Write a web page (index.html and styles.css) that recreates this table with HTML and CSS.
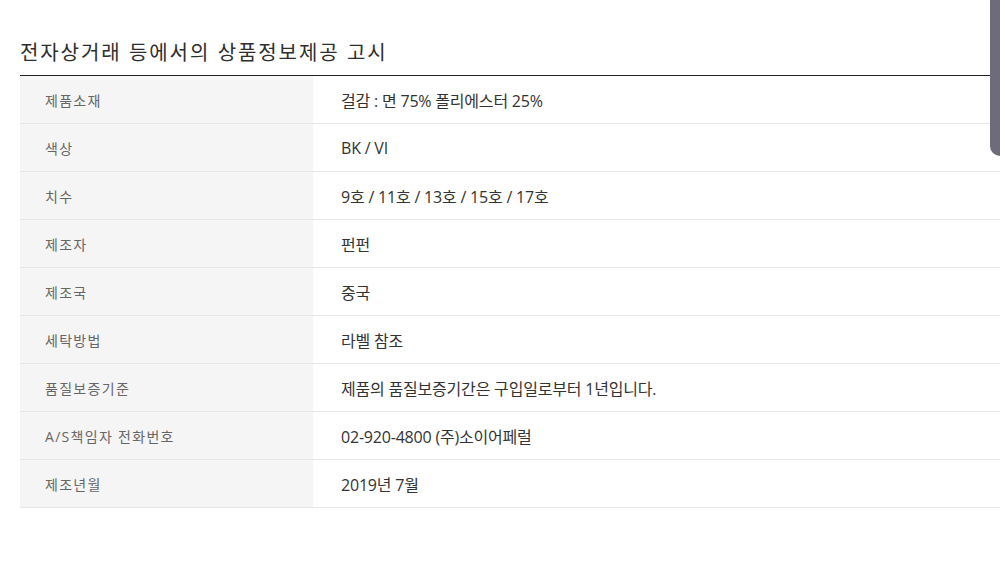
FILE: index.html
```html
<!DOCTYPE html>
<html lang="ko">
<head>
<meta charset="utf-8">
<link rel="stylesheet" href="styles.css">
</head>
<body>
<div class="page">
  <h2 class="title">전자상거래 등에서의 상품정보제공 고시</h2>
  <div class="table">
    <div class="row"><div class="label">제품소재</div><div class="value">걸감 : 면 75% 폴리에스터 25%</div></div>
    <div class="row"><div class="label">색상</div><div class="value">BK / VI</div></div>
    <div class="row"><div class="label">치수</div><div class="value">9호 / 11호 / 13호 / 15호 / 17호</div></div>
    <div class="row"><div class="label">제조자</div><div class="value">펀펀</div></div>
    <div class="row"><div class="label">제조국</div><div class="value">중국</div></div>
    <div class="row"><div class="label">세탁방법</div><div class="value">라벨 참조</div></div>
    <div class="row"><div class="label">품질보증기준</div><div class="value">제품의 품질보증기간은 구입일로부터 1년입니다.</div></div>
    <div class="row"><div class="label">A/S책임자 전화번호</div><div class="value">02-920-4800 (주)소이어페럴</div></div>
    <div class="row"><div class="label">제조년월</div><div class="value">2019년 7월</div></div>
  </div>
</div>
<div class="scroll-thumb"></div>
</body>
</html>
```
FILE: styles.css
```css
html, body {
  margin: 0;
  padding: 0;
  background: #fff;
  font-family: "Noto Sans CJK KR", "Noto Sans", sans-serif;
  overflow: hidden;
}
.page {
  padding: 38px 0 0 20px;
}
.title {
  margin: 0;
  height: 37px;
  font-size: 20px;
  line-height: 28px;
  font-weight: 400;
  color: #2e2e2e;
  letter-spacing: 1.9px;
}
.table {
  width: 980px;
  border-top: 1.5px solid #222;
}
.row {
  display: flex;
  height: 47px;
  border-bottom: 1px solid #e6e6e6;
}
.label {
  width: 268px;
  padding-left: 25px;
  background: #f5f5f5;
  display: flex;
  align-items: center;
  font-family: "Open Sans", "Noto Sans CJK KR", sans-serif;
  font-size: 14px;
  color: #666;
  letter-spacing: 1.3px;
}
.value {
  flex: 1;
  padding-left: 28px;
  display: flex;
  align-items: center;
  font-family: "Open Sans", "Noto Sans CJK KR", sans-serif;
  font-size: 16px;
  color: #333;
  letter-spacing: -0.2px;
}
.scroll-thumb {
  position: fixed;
  top: 0;
  right: 0;
  width: 10px;
  height: 156px;
  background: #6e6c7b;
  border-bottom-left-radius: 10px;
}
```
